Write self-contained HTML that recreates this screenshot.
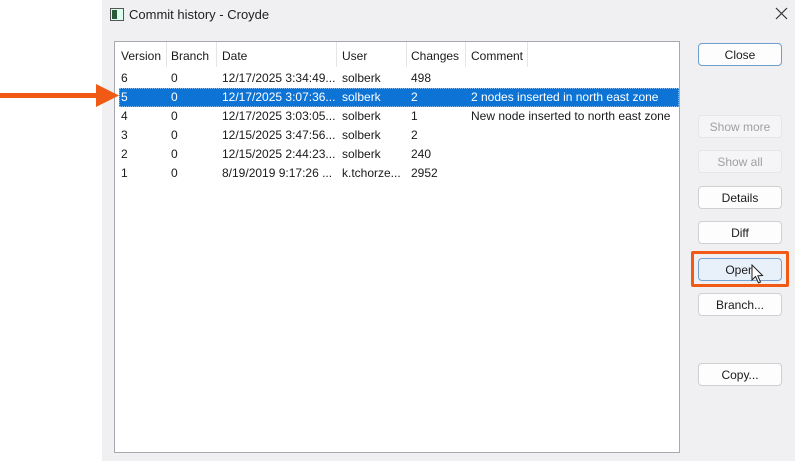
<!DOCTYPE html>
<html><head><style>
body{margin:0;width:795px;height:461px;background:#fff;position:relative;overflow:hidden;font-family:"Liberation Sans",sans-serif;font-size:12px;color:#1a1a1a}
.win{position:absolute;left:102px;top:0;width:693px;height:461px;background:#f0eff2}
.title{position:absolute;left:129px;top:7px;font-size:13px;color:#222}
.ico{position:absolute;left:110px;top:8px;width:12px;height:11px;border:1px solid #555;background:#dfe;}
.ico:before{content:"";position:absolute;left:1px;top:1px;width:5px;height:9px;background:#2a5a3a}
.list{position:absolute;left:114px;top:41px;width:564px;height:410px;background:#fff;border:1px solid #a8a8ae}
.c{position:absolute;white-space:nowrap}
.hdr{position:absolute;top:0;height:25px;border-right:1px solid #e5e5e5}
.sel{position:absolute;left:4px;top:46px;width:560px;height:19px;background:#0d74d6;border:1px dotted #8bbcf0;box-sizing:border-box}
.btn{position:absolute;left:698px;width:84px;height:23px;background:#fdfdfd;border:1px solid #d0d0d0;border-radius:4px;text-align:center;line-height:22px;box-sizing:border-box;font-size:12px}
.dis{color:#a0a0a0;background:#f5f5f7;border-color:#e6e6e8}
</style></head><body>
<div class="win"></div>
<div class="ico"></div>
<div class="title">Commit history - Croyde</div>
<svg style="position:absolute;left:775px;top:7px" width="13" height="13"><path d="M1 1 L12 12 M12 1 L1 12" stroke="#333" stroke-width="1.2"/></svg>
<div class="list">
<div class="hdr" style="left:0;width:51px"></div>
<div class="hdr" style="left:51px;width:50px"></div>
<div class="hdr" style="left:101px;width:120px"></div>
<div class="hdr" style="left:221px;width:70px"></div>
<div class="hdr" style="left:291px;width:59px"></div>
<div class="hdr" style="left:350px;width:62px"></div>
<div class="sel"></div>
</div>
<div style="position:absolute;left:0;top:0">
<div class="c" style="left:121px;top:49px">Version</div><div class="c" style="left:171px;top:49px">Branch</div><div class="c" style="left:222px;top:49px">Date</div><div class="c" style="left:342px;top:49px">User</div><div class="c" style="left:411px;top:49px">Changes</div><div class="c" style="left:471px;top:49px">Comment</div>

<div class="c" style="left:121px;top:71px">6</div><div class="c" style="left:171px;top:71px">0</div><div class="c" style="left:222px;top:71px">12/17/2025 3:34:49...</div><div class="c" style="left:342px;top:71px">solberk</div><div class="c" style="left:411px;top:71px">498</div>

<div class="c" style="left:121px;top:90px;color:#fff">5</div><div class="c" style="left:171px;top:90px;color:#fff">0</div><div class="c" style="left:222px;top:90px;color:#fff">12/17/2025 3:07:36...</div><div class="c" style="left:342px;top:90px;color:#fff">solberk</div><div class="c" style="left:411px;top:90px;color:#fff">2</div><div class="c" style="left:471px;top:90px;color:#fff">2 nodes inserted in north east zone</div>

<div class="c" style="left:121px;top:109px">4</div><div class="c" style="left:171px;top:109px">0</div><div class="c" style="left:222px;top:109px">12/17/2025 3:03:05...</div><div class="c" style="left:342px;top:109px">solberk</div><div class="c" style="left:411px;top:109px">1</div><div class="c" style="left:471px;top:109px">New node inserted to north east zone</div>

<div class="c" style="left:121px;top:128px">3</div><div class="c" style="left:171px;top:128px">0</div><div class="c" style="left:222px;top:128px">12/15/2025 3:47:56...</div><div class="c" style="left:342px;top:128px">solberk</div><div class="c" style="left:411px;top:128px">2</div>

<div class="c" style="left:121px;top:147px">2</div><div class="c" style="left:171px;top:147px">0</div><div class="c" style="left:222px;top:147px">12/15/2025 2:44:23...</div><div class="c" style="left:342px;top:147px">solberk</div><div class="c" style="left:411px;top:147px">240</div>

<div class="c" style="left:121px;top:166px">1</div><div class="c" style="left:171px;top:166px">0</div><div class="c" style="left:222px;top:166px">8/19/2019 9:17:26 ...</div><div class="c" style="left:342px;top:166px">k.tchorze...</div><div class="c" style="left:411px;top:166px">2952</div>
</div>

<div class="btn" style="top:43px;border-color:#6f9fcf;border-width:1px">Close</div>
<div class="btn dis" style="top:115px">Show more</div>
<div class="btn dis" style="top:150px">Show all</div>
<div class="btn" style="top:186px">Details</div>
<div class="btn" style="top:221px">Diff</div>
<div style="position:absolute;left:691px;top:251px;width:98px;height:36px;border:3px solid #f05a14;box-sizing:border-box;border-radius:2px"></div>
<div class="btn" style="top:258px;background:#e8f0fa;border-color:#7aa4d0">Open</div>
<svg style="position:absolute;left:751px;top:264px" width="14" height="22" viewBox="0 0 14 22"><path d="M1 1 L1 16 L4.5 12.5 L7.5 19 L9.5 18 L6.8 11.8 L11.5 11.5 Z" fill="#fff" stroke="#222" stroke-width="1"/></svg>
<div class="btn" style="top:293px">Branch...</div>
<div class="btn" style="top:363px">Copy...</div>

<svg style="position:absolute;left:0;top:83px" width="122" height="26"><rect x="0" y="10" width="98" height="5" fill="#f05a14"/><path d="M96 1 L119 12.5 L96 24 Z" fill="#f05a14"/></svg>
</body></html>
